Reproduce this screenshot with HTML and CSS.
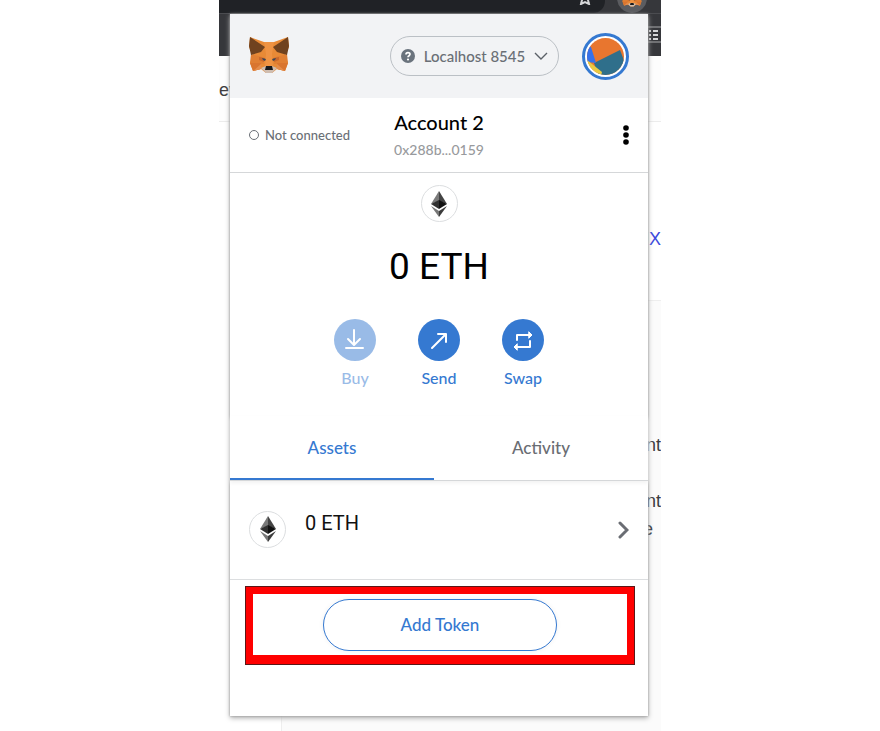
FILE: index.html
```
<!DOCTYPE html>
<html lang="en">
<head>
<meta charset="utf-8">
<title>Wallet</title>
<link rel="stylesheet" href="styles.css">
</head>
<body>
<svg class="defs" width="0" height="0" aria-hidden="true">
  <symbol id="fox" viewBox="0 0 40 40">
    <path fill="#e88a36" d="M1 1 15 6H25L39 1 40 11 36 19 39 27 36 35 28 33 23 37H17L12 33 4 35 1 27 4 19 0 11Z"/>
    <path fill="#e07f33" d="M2 18 13 21 15 28 1 27ZM38 18 27 21 25 28 39 27Z"/>
    <path fill="#d9752f" d="M1 27H12L12 33 4 35ZM39 27H28L28 33 36 35Z"/>
    <path fill="#ef9343" d="M15 6H25L23 18 24 30H16L17 18Z"/>
    <path fill="#e48c4b" d="M4 35 12 28 12 33ZM36 35 28 28 28 33Z"/>
    <path fill="#c9682b" d="M10 21 16 22 15 26 10 24ZM30 21 24 22 25 26 30 24Z"/>
    <path fill="#70421f" d="M1 1 16 11 12 16 2 19 0 10ZM39 1 24 11 28 16 38 19 40 10Z"/>
    <path fill="#3c4657" d="M13 22 17 23 16 25 14 24ZM27 22 23 23 24 25 26 24Z"/>
    <path fill="#cfbdb0" d="M12 32 17 30H23L28 32 23 37H17Z"/>
    <path fill="#191a1d" d="M17 30H23L24 34H16Z"/>
  </symbol>
  <symbol id="eth" viewBox="0 0 16 26">
    <path fill="#7a7a7a" d="M8 0V10L0 13Z"/>
    <path fill="#444" d="M8 0V10L16 13Z"/>
    <path fill="#303030" d="M8 9V18L0 13Z"/>
    <path fill="#111" d="M8 9V18L16 13Z"/>
    <path fill="#777" d="M0 15 8 20V26Z"/>
    <path fill="#3c3c3c" d="M16 15 8 20V26Z"/>
  </symbol>
</svg>
<div class="stage">
  <div class="backdrop" aria-hidden="true">
    <div class="browser-top"><div class="omnibox"><svg width="14" height="14" viewBox="0 0 14 14"><path d="M7 1 9 5 13 6 10 9 11 13 7 11 3 13 4 9 1 6 5 5Z" fill="none" stroke="#d5d6d8" stroke-width="2"/></svg></div><div class="extension"><svg width="20" height="20"><use href="#fox"/></svg></div></div>
    <div class="bookmarks"><svg width="13" height="18" viewBox="0 0 13 18"><path d="M0 1H13M0 16H13" stroke="#a9abad"/><path d="M1 5H3M1 9H3M1 13H3M5 5H10M5 9H10M5 13H10" stroke="#d5d6d8" stroke-width="2"/></svg></div>
    <div class="page-nav"></div>
    <div class="page-lead"></div>
    <div class="page-body"></div>
    <span class="scrap scrap-nav">ev</span>
    <span class="scrap scrap-link">UX</span>
    <span class="scrap scrap-one">nt</span>
    <span class="scrap scrap-two">nt</span>
    <span class="scrap scrap-three">e</span>
  </div>
  <main class="popup">
    <header class="header">
      <svg class="logo" width="40" height="40" role="img" aria-label="Fox"><use href="#fox"/></svg>
      <button class="network" type="button">
        <svg width="14" height="14" viewBox="0 0 14 14"><circle cx="7" cy="7" r="7" fill="#6a737d"/><path d="M5 5.5C5 3 9 3 9 5.3 9 6.8 7 6.7 7 8.3" fill="none" stroke="#fff" stroke-width="1.7"/><circle cx="7" cy="10.5" r="1.1" fill="#fff"/></svg>
        <span>Localhost 8545</span>
        <svg width="14" height="8" viewBox="0 0 14 8"><path d="M1 1 7 7 13 1" fill="none" stroke="#5b6168" stroke-width="1.4"/></svg>
      </button>
      <button class="avatar" type="button" aria-label="Accounts">
        <svg width="37" height="37" viewBox="0 0 37 37"><clipPath id="face"><circle cx="18.5" cy="18.5" r="18.5"/></clipPath><g clip-path="url(#face)"><path fill="#e8762f" d="M0 0H37V37H0Z"/><path fill="#2f6f8b" d="M7 25 33 12 40 30 20 42 11 36Z"/><path fill="#3671ea" d="M0 7 4 9 9 25 0 24Z"/><path fill="#eac942" d="M0 22 15 34 14 38 0 37Z"/></g></svg>
      </button>
    </header>
    <section class="account">
      <div class="status"><span class="status-dot"></span>Not connected</div>
      <button class="account-name" type="button"><span class="name">Account 2</span><span class="address">0x288b...0159</span></button>
      <button class="more" type="button" aria-label="Account options"><svg width="6" height="20" viewBox="0 0 6 20"><circle cx="3" cy="3" r="2.8"/><circle cx="3" cy="10" r="2.8"/><circle cx="3" cy="17" r="2.8"/></svg></button>
    </section>
    <section class="overview">
      <span class="token"><svg width="16" height="26"><use href="#eth"/></svg></span>
      <div class="balance">0 ETH</div>
      <div class="actions">
        <button class="action" type="button" disabled><span class="disc"><svg width="42" height="42" viewBox="0 0 42 42"><path d="M20 11V25M14 20 20 26 26 20M12 29H29" /></svg></span>Buy</button>
        <button class="action" type="button"><span class="disc"><svg width="42" height="42" viewBox="0 0 42 42"><path d="M14 29 28 15M20 15H28V23"/></svg></span>Send</button>
        <button class="action" type="button"><span class="disc"><svg width="42" height="42" viewBox="0 0 42 42"><path d="M15 21V16H27M28 22V28H15"/><path class="solid" d="M27 13 30 16 27 19ZM15 25 12 28 15 31Z"/></svg></span>Swap</button>
      </div>
    </section>
    <nav class="tabs">
      <button class="tab tab-active" type="button">Assets</button>
      <button class="tab" type="button">Activity</button>
    </nav>
    <button class="asset" type="button">
      <span class="token"><svg width="16" height="26"><use href="#eth"/></svg></span>
      <span class="amount">0 ETH</span>
      <svg width="11" height="18" viewBox="0 0 11 18"><path d="M2 2 9 9 2 16" fill="none" stroke="#6a6d73" stroke-width="3" stroke-linecap="round"/></svg>
    </button>
    <div class="highlight"><button class="add-token" type="button">Add Token</button></div>
  </main>
</div>
</body>
</html>
```
FILE: styles.css
```
* { box-sizing: border-box; }
body { margin: 0; background: #fff; font-family: Lato, "Liberation Sans", sans-serif; font-weight: 500; }
button { font: inherit; color: inherit; margin: 0; padding: 0; border: 0; background: none; }
svg { display: block; flex: none; }
.defs { position: absolute; }

.stage {
  position: relative;
  max-width: 442px;
  min-height: 100vh;
  margin: 0 auto;
  padding: 14px 13px 15px 11px;
  overflow: hidden;
}

.backdrop { position: absolute; inset: 0; display: flex; flex-direction: column; }
.browser-top { display: flex; height: 13px; background: #36373b; }
.omnibox { display: flex; flex: 1; margin-right: 12px; justify-content: flex-end; align-items: flex-end; padding: 0 13px 8px 0; background: #202226; border-bottom-right-radius: 12px; }
.extension { display: flex; width: 30px; height: 30px; margin: -17px 14px 0 0; align-items: flex-end; justify-content: center; padding-bottom: 5px; border-radius: 50%; background: #5b5c60; }
.bookmarks { display: flex; height: 43px; justify-content: flex-end; align-items: center; background: #36373b; border-top: 1px solid #4b4c50; }
.page-nav { height: 66px; background: #fdfdfd; border-bottom: 1px solid #ececec; }
.page-lead { height: 178px; }
.page-body { flex: 1; margin-left: 62px; background: #fbfbfb; border: 1px solid #eee; border-width: 1px 0 0 1px; }
.scrap { position: absolute; font: 18px/20px "Liberation Sans", sans-serif; color: #3c3c40; }
.scrap-nav { left: 0; top: 80px; }
.scrap-link { right: 0; top: 229px; color: #3b48dc; }
.scrap-one { right: 0; top: 435px; }
.scrap-two { right: 0; top: 491px; }
.scrap-three { left: 424px; top: 519px; }

.popup { position: relative; min-height: 702px; background: #fff; box-shadow: 0 0 2px #999, 0 2px 5px #aaa; }
.header { display: flex; height: 84px; align-items: center; padding: 0 19px; background: #f2f3f5; }
.network { display: flex; width: 169px; height: 40px; margin-left: auto; align-items: center; justify-content: space-between; padding: 0 10px; border: 1px solid #bbc0c5; border-radius: 20px; color: #6a6f76; font-size: 15px; line-height: 20px; }
.avatar { display: grid; width: 47px; height: 47px; margin-left: 23px; place-items: center; border: 3px solid #3579d1; border-radius: 50%; background: #fff; }

.account { display: grid; grid-template-columns: 1fr auto 1fr; height: 75px; align-items: center; padding: 0 19px; border-bottom: 1px solid #d5d7d9; }
.status { display: flex; align-items: center; gap: 6px; color: #6a6f76; font-size: 13px; line-height: 20px; }
.status-dot { width: 10px; height: 10px; border: 1px solid #6a6f76; border-radius: 50%; }
.account-name { display: grid; gap: 6px; text-align: center; }
.name { color: #000; font-size: 20px; line-height: 24px; }
.address { color: #989a9d; font-size: 14px; line-height: 20px; }
.more { justify-self: end; }

.overview { display: flex; flex-direction: column; align-items: center; padding-top: 12px; }
.token { display: grid; flex: none; width: 37px; height: 37px; place-items: center; border: 1px solid #dcdee0; border-radius: 50%; background: #fff; }
.balance { margin-top: 21px; color: #000; font: 37px/48px Roboto, sans-serif; }
.actions { display: flex; gap: 24px; margin-top: 28px; }
.action { display: grid; width: 60px; gap: 7px; justify-items: center; color: #3579d1; font-size: 16px; line-height: 20px; }
.action:disabled { opacity: .5; }
.disc { border-radius: 50%; background: #3579d1; }
.disc path { fill: none; stroke: #fff; stroke-width: 2; stroke-linecap: round; stroke-linejoin: round; }
.disc .solid { fill: #fff; stroke-width: 1; }

.tabs { display: flex; height: 65px; margin-top: 28px; border-bottom: 1px solid #d5d7d9; box-shadow: 0 2px 4px #f2f2f2; }
.tab { flex: 1; color: #6a6d73; font-size: 17px; line-height: 20px; border-bottom: 2px solid transparent; padding-top: 2px; }
.tab-active { flex: 0 0 204px; color: #3579d1; border-bottom-color: #3579d1; }

.asset { display: flex; width: 100%; height: 99px; align-items: center; gap: 19px; padding: 0 19px; border-bottom: 1px solid #dcdee0; }
.asset .token { margin-bottom: 2px; }
.amount { flex: 1; padding-bottom: 14px; text-align: left; color: #111; font: 20px/24px Roboto, sans-serif; }

.highlight { display: grid; height: 79px; margin: 6px 13px 0 15px; place-items: center; border: 8px solid #f00; border-bottom-width: 10px; outline: 1px solid #5b1717; outline-offset: -1px; }
.add-token { width: 234px; height: 52px; border: 1px solid #3579d1; border-radius: 26px; background: #fff; color: #3579d1; font-size: 17px; line-height: 20px; box-shadow: 0 0 5px #f0f0f0; }
```
